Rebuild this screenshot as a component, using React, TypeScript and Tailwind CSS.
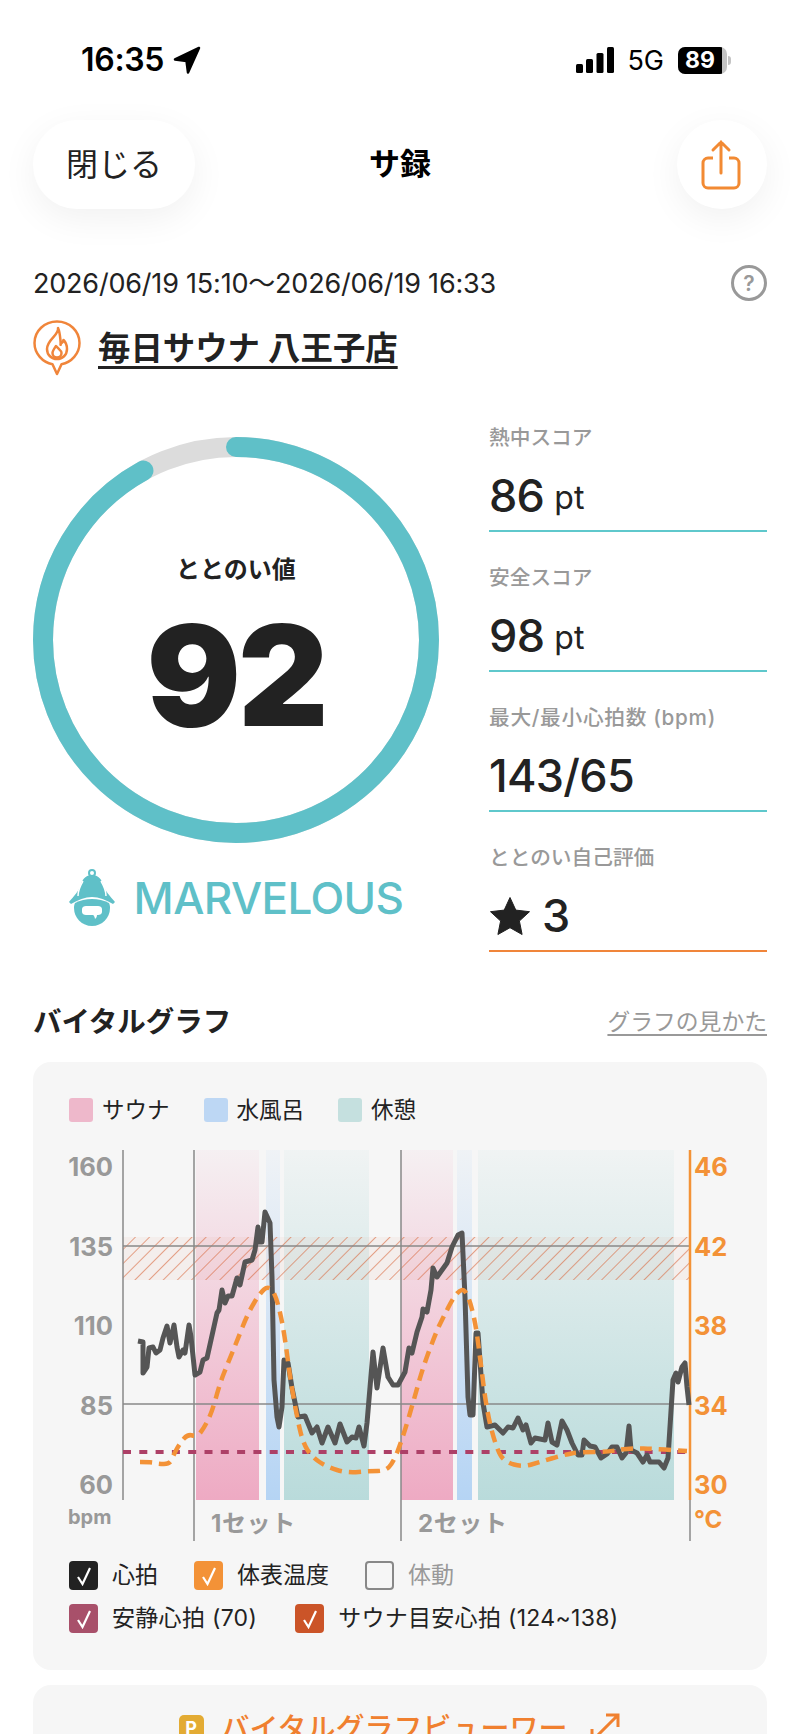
import React from "react";

const FONT = { fontFamily: 'Inter, "Noto Sans CJK JP", sans-serif' };

const HEART: [number, number][] = [
  [138, 1341], [143, 1342], [143, 1373], [147, 1367], [149, 1348], [153, 1347], [156, 1353], [160, 1350],
  [163, 1338], [167, 1326], [170, 1343], [174, 1325], [177, 1347], [179, 1357], [183, 1350], [185, 1353],
  [189, 1325], [191, 1337], [195, 1375], [200, 1372], [203, 1360], [207, 1358], [211, 1340], [217, 1313],
  [219, 1310], [222, 1290], [225, 1303], [228, 1296], [232, 1296], [237, 1278], [240, 1285], [245, 1262],
  [252, 1260], [255, 1250], [258, 1227], [260, 1242], [262, 1242], [265, 1212], [270, 1223], [272, 1277],
  [274, 1380], [277, 1417], [279, 1427], [282, 1407], [284, 1360], [288, 1363], [292, 1388], [298, 1417],
  [305, 1416], [312, 1433], [317, 1427], [322, 1443], [328, 1427], [335, 1443], [340, 1424], [347, 1442],
  [352, 1437], [356, 1438], [359, 1427], [364, 1446], [367, 1423], [373, 1352], [377, 1388], [383, 1348],
  [388, 1377], [393, 1385], [398, 1385], [405, 1372], [409, 1348], [412, 1353], [417, 1332], [422, 1317],
  [423, 1309], [427, 1312], [431, 1290], [433, 1268], [437, 1277], [442, 1270], [447, 1263], [452, 1247],
  [458, 1235], [462, 1233], [465, 1297], [468, 1397], [470, 1415], [473, 1415], [476, 1333], [478, 1333],
  [483, 1403], [487, 1427], [495, 1425], [503, 1433], [508, 1427], [513, 1428], [518, 1418], [523, 1430],
  [526, 1425], [531, 1443], [535, 1438], [545, 1440], [548, 1423], [552, 1442], [557, 1445], [562, 1421],
  [567, 1430], [572, 1443], [578, 1455], [582, 1455], [584, 1440], [590, 1446], [595, 1447], [601, 1458],
  [607, 1454], [612, 1447], [617, 1447], [622, 1458], [626, 1453], [629, 1426], [631, 1450], [637, 1453],
  [643, 1462], [647, 1455], [650, 1462], [659, 1462], [664, 1468], [668, 1458], [673, 1380], [676, 1373],
  [678, 1382], [682, 1367], [685, 1363], [687, 1387], [689, 1405],
];

const TEMP: [number, number][] = [
  [140, 1462], [152, 1462], [158, 1464], [170, 1464], [173, 1456], [180, 1443], [188, 1434], [197, 1437],
  [204, 1428], [212, 1412], [220, 1383], [228, 1363], [237, 1341], [248, 1313], [260, 1293], [268, 1286],
  [275, 1293], [282, 1320], [287, 1353], [290, 1377], [297, 1417], [303, 1443], [312, 1457], [327, 1467],
  [347, 1473], [370, 1471], [385, 1471], [393, 1463], [402, 1440], [413, 1403], [423, 1367], [437, 1330],
  [443, 1318], [453, 1298], [462, 1288], [468, 1295], [475, 1320], [480, 1357], [487, 1413], [497, 1450],
  [505, 1462], [523, 1467], [540, 1462], [563, 1455], [580, 1452], [607, 1452], [630, 1448], [657, 1449],
  [687, 1451],
];

const linePath = (pts: [number, number][]) =>
  pts.map(([x, y], i) => `${i === 0 ? "M" : "L"}${x} ${y}`).join(" ");

// quadratic through the midpoints, good enough for the temperature curve
const smoothPath = (pts: [number, number][]) => {
  let d = `M${pts[0][0]} ${pts[0][1]}`;
  for (let i = 1; i < pts.length - 1; i++) {
    const mx = (pts[i][0] + pts[i + 1][0]) / 2;
    const my = (pts[i][1] + pts[i + 1][1]) / 2;
    d += ` Q${pts[i][0]} ${pts[i][1]} ${mx} ${my}`;
  }
  const last = pts[pts.length - 1];
  return `${d} L${last[0]} ${last[1]}`;
};

function StatusBar() {
  return (
    <div className="flex h-[120px] items-center justify-between pl-[81px] pr-[69px] text-black">
      <div className="flex items-center gap-[9px]">
        <span className="text-[32px] font-semibold leading-none tracking-[-0.3px]">16:35</span>
        <svg width="28" height="28" viewBox="0 0 28 28">
          <path d="M26 2 2 13.500 13.500 15 15 26.500Z" fill="#000" stroke="#000" strokeWidth="2.500" strokeLinejoin="round" />
        </svg>
      </div>
      <div className="flex items-center">
        <svg width="38" height="26" viewBox="0 0 38 26">
          <rect x="0" y="17" width="7" height="9" rx="1.500" fill="#000" />
          <rect x="10" y="12" width="7" height="14" rx="1.500" fill="#000" />
          <rect x="20.500" y="6" width="7" height="20" rx="1.500" fill="#000" />
          <rect x="31" y="0" width="7" height="26" rx="1.500" fill="#000" />
        </svg>
        <span className="ml-[13px] text-[27px] font-normal leading-none">5G</span>
        <div className="ml-[14px] flex items-center">
          <div className="flex h-[27px] w-[49px] items-center overflow-hidden rounded-[7px] bg-[#c4c4c4]">
            <div className="flex h-full w-[44px] items-center justify-center bg-black text-[23px] font-bold leading-none text-white">
              89
            </div>
          </div>
          <div className="ml-[1px] h-[9px] w-[3px] rounded-r-full bg-[#c4c4c4]" />
        </div>
      </div>
    </div>
  );
}

function Header() {
  return (
    <div className="grid h-[89px] grid-cols-[1fr_auto_1fr] items-center px-[33px]">
      <div className="flex h-[89px] w-[162px] items-center justify-center rounded-[44px] bg-white text-[32px] text-[#222] shadow-[0_10px_36px_rgba(0,0,0,0.06)]">
        閉じる
      </div>
      <div className="text-[31px] font-bold text-black">サ録</div>
      <div className="flex justify-end">
        <div className="flex h-[89px] w-[90px] items-center justify-center rounded-full bg-white shadow-[0_10px_36px_rgba(0,0,0,0.06)]">
          <svg width="40" height="52" viewBox="0 0 40 52" fill="none" stroke="#f28a33" strokeWidth="3" className="mr-[2px]">
            <path d="M12 19H7a5 5 0 0 0-5 5v20a5 5 0 0 0 5 5h26a5 5 0 0 0 5-5V24a5 5 0 0 0-5-5h-5" />
            <path d="M20 34V3M12 11l8-8 8 8" strokeLinecap="round" />
          </svg>
        </div>
      </div>
    </div>
  );
}

function PlaceIcon() {
  return (
    <svg width="48" height="56" viewBox="0 0 48 56" fill="none" stroke="#f0853a" strokeWidth="2.500" strokeLinejoin="round">
      <path d="M24 1.500C11.500 1.500 1.500 11 1.500 23c0 10.500 8 19.500 18 21.200L24 54l4.500-9.800c10-1.700 18-10.700 18-21.200C46.500 11 36.500 1.500 24 1.500Z" />
      <path d="M25 8c1.500 7-11 11-11 21 0 6 4.500 10 10 10s10-4 10-10c0-4-2-7.500-3.500-9-.5 2-1.500 3.500-3 4.200C28 28 27.500 13 25 8Z" />
      <path d="M23 26c-2 3-3.500 5-3.500 7a4.500 4.500 0 0 0 9 0c0-2.500-3-4-5.500-7Z" />
    </svg>
  );
}

function Mascot() {
  return (
    <svg width="50" height="57" viewBox="0 0 50 57">
      <circle cx="25" cy="4" r="3" fill="none" stroke="#5fc0c8" strokeWidth="2" />
      <path d="M25 6c-5 0-9 3-11 9-2 7-7 12-12 18l2 2c7-4 14-7 21-7s14 3 21 7l2-2c-5-6-10-11-12-18-2-6-6-9-11-9Z" fill="#5fc0c8" />
      <path d="M16 12c-3 5-5 10-5 15M34 12c3 5 5 10 5 15" stroke="#fff" strokeWidth="1.500" fill="none" />
      <path d="M8 34c5-2.500 11-4 17-4s12 1.500 17 4c1 2 1 4 1 5 0 10-8 18-18 18S7 49 7 39c0-1 0-3 1-5Z" fill="#5fc0c8" />
      <path d="M15 40c0-2 2-3 4-3h12c2 0 4 1 4 3v3c0 2-2 3-4 3h-1c0 2-1 3-2 4 0-1-1-4-2-4h-7c-2 0-4-1-4-3Z" fill="#fff" />
    </svg>
  );
}

function ScoreRing() {
  const r = 193;
  const circumference = 2 * Math.PI * r;
  return (
    <div className="grid h-[406px] w-[406px]">
      <svg width="406" height="406" viewBox="0 0 406 406" className="[grid-area:1/1]">
        <circle cx="203" cy="203" r={r} fill="none" stroke="#dcdcdc" strokeWidth="20" />
        <circle
          cx="203"
          cy="203"
          r={r}
          fill="none"
          stroke="#5fc0c8"
          strokeWidth="20"
          strokeLinecap="round"
          strokeDasharray={`${circumference * 0.92} ${circumference}`}
          transform="rotate(-90 203 203)"
        />
      </svg>
      <div className="flex flex-col items-center [grid-area:1/1]">
        <div className="mt-[113px] text-[24px] font-semibold leading-[40px] text-[#222]">ととのい値</div>
        <div className="mt-[17px] text-[140px] font-black leading-[136px] tracking-[-3px] text-[#222]">92</div>
      </div>
    </div>
  );
}

function Stat({ label, value, unit, line = "border-[#5fc8cc]", spaced }: { label: string; value: React.ReactNode; unit?: string; line?: string; spaced?: boolean }) {
  return (
    <div className={`h-[115px] border-b-2 ${line}`}>
      <div className={`h-[42px] text-[20.7px] font-medium leading-[42px] text-[#999] ${spaced ? "tracking-[0.7px]" : ""}`}>{label}</div>
      <div className="flex h-[71px] items-center pt-[2px] text-[45px] font-medium leading-none tracking-[-0.7px] text-[#222]">
        {value}
        {unit && <span className="ml-[10px] mt-[4px] text-[32px] font-normal tracking-normal">{unit}</span>}
      </div>
    </div>
  );
}

function Chart() {
  const labelsL = [["160", 1176], ["135", 1256], ["110", 1335], ["85", 1415], ["60", 1494]];
  const labelsR = [["46", 1176], ["42", 1256], ["38", 1335], ["34", 1415], ["30", 1494]];
  return (
    <svg width="734" height="410" viewBox="33 1140 734 410" className="mt-[18px] block">
      <defs>
        <linearGradient id="sauna" x1="0" y1="0" x2="0" y2="1">
          <stop offset="0" stopColor="#eeaac3" stopOpacity="0.08" />
          <stop offset="1" stopColor="#eeaac3" />
        </linearGradient>
        <linearGradient id="cold" x1="0" y1="0" x2="0" y2="1">
          <stop offset="0" stopColor="#b5d4f4" stopOpacity="0.1" />
          <stop offset="1" stopColor="#b5d4f4" />
        </linearGradient>
        <linearGradient id="rest" x1="0" y1="0" x2="0" y2="1">
          <stop offset="0" stopColor="#b9dbdb" stopOpacity="0.1" />
          <stop offset="1" stopColor="#b9dbdb" />
        </linearGradient>
        <pattern id="hatch" width="10" height="10" patternUnits="userSpaceOnUse" patternTransform="rotate(45)">
          <line x1="0" y1="0" x2="0" y2="10" stroke="#d9693f" strokeWidth="2" strokeOpacity="0.6" />
        </pattern>
      </defs>

      <rect x="196" y="1150" width="63" height="350" fill="url(#sauna)" />
      <rect x="266" y="1150" width="14" height="350" fill="url(#cold)" />
      <rect x="284" y="1150" width="85" height="350" fill="url(#rest)" />
      <rect x="401" y="1150" width="52" height="350" fill="url(#sauna)" />
      <rect x="457" y="1150" width="15" height="350" fill="url(#cold)" />
      <rect x="478" y="1150" width="196" height="350" fill="url(#rest)" />

      <rect x="123" y="1237" width="567" height="43" fill="#e58f6c" fillOpacity="0.07" />
      <rect x="123" y="1237" width="567" height="43" fill="url(#hatch)" />

      <line x1="123" y1="1246" x2="690" y2="1246" stroke="#888" strokeWidth="1.500" />
      <line x1="123" y1="1404" x2="690" y2="1404" stroke="#888" strokeWidth="1.500" />

      <line x1="123" y1="1150" x2="123" y2="1500" stroke="#888" strokeWidth="1.500" />
      <line x1="194" y1="1150" x2="194" y2="1541" stroke="#888" strokeWidth="1.500" />
      <line x1="401" y1="1150" x2="401" y2="1541" stroke="#888" strokeWidth="1.500" />
      <line x1="690" y1="1500" x2="690" y2="1541" stroke="#888" strokeWidth="1.500" />
      <line x1="690" y1="1150" x2="690" y2="1500" stroke="#f39237" strokeWidth="2.500" />

      <line x1="123" y1="1452" x2="690" y2="1452" stroke="#ad4067" strokeWidth="4" strokeDasharray="8 8.300" />
      <path d={linePath(HEART)} fill="none" stroke="#555" strokeWidth="5" strokeLinejoin="round" />
      <path d={smoothPath(TEMP)} fill="none" stroke="#f39237" strokeWidth="4.500" strokeDasharray="12 7" />

      <g style={FONT} fontSize="25.500" fontWeight="700">
        {labelsL.map(([t, y]) => (
          <text key={t} x="113" y={y} textAnchor="end" fill="#999">
            {t}
          </text>
        ))}
        {labelsR.map(([t, y]) => (
          <text key={t} x="694" y={y} fill="#f39237">
            {t}
          </text>
        ))}
        <text x="694" y="1528" fill="#f39237" fontSize="24">
          °C
        </text>
        <text x="68" y="1524" fill="#999" fontSize="20">
          bpm
        </text>
        <text x="211" y="1532" fill="#999" fontSize="24" letterSpacing="0.600">
          1セット
        </text>
        <text x="418" y="1532" fill="#999" fontSize="24" letterSpacing="0.600">
          2セット
        </text>
      </g>
    </svg>
  );
}

function Check({ color, label, off, spaced }: { color: string; label: string; off?: boolean; spaced?: boolean }) {
  return (
    <div className="flex items-center gap-[14px]">
      <div className={`flex h-[29px] w-[29px] items-center justify-center rounded-[4px] ${color}`}>
        {!off && (
          <svg width="16" height="20" viewBox="0 0 16 20" fill="none" stroke="#fff" strokeWidth="2.200">
            <path d="M2 11l4.500 7L14 2" />
          </svg>
        )}
      </div>
      <span className={`text-[23px] leading-none ${off ? "text-[#999]" : "text-[#222]"} ${spaced ? "tracking-[0.3px]" : ""}`}>{label}</span>
    </div>
  );
}

function Legend({ color, label }: { color: string; label: string }) {
  return (
    <div className="flex items-center gap-[9px]">
      <div className={`h-[24px] w-[24px] rounded-[3px] ${color}`} />
      <span className="text-[22.500px] leading-none text-[#222]">{label}</span>
    </div>
  );
}

export default function App() {
  return (
    <div className="h-[1734px] w-[800px] overflow-hidden bg-white" style={FONT}>
      <StatusBar />
      <Header />

      <div className="mt-[54px] flex h-[40px] items-center justify-between px-[33px]">
        <span className="text-[27px] leading-none tracking-[-0.2px] text-[#222]">2026/06/19 15:10～2026/06/19 16:33</span>
        <div className="flex h-[36px] w-[36px] items-center justify-center rounded-full border-[3px] border-[#999] text-[21px] font-semibold leading-none text-[#999]">
          ?
        </div>
      </div>

      <div className="mt-[17px] flex h-[55px] items-start gap-[17px] px-[33px]">
        <PlaceIcon />
        <span className="mt-[8px] text-[32.400px] font-semibold leading-[42px] text-[#222] underline decoration-[3px] underline-offset-[6px]">
          毎日サウナ 八王子店
        </span>
      </div>

      <div className="mt-[42px] flex justify-between px-[33px]">
        <div className="pt-[20px]">
          <ScoreRing />
          <div className="mt-[26px] flex h-[57px] items-center justify-center gap-[17px] pr-[2px]">
            <Mascot />
            <span className="text-[44px] font-medium leading-none tracking-[-0.6px] text-[#5fc0c8]">MARVELOUS</span>
          </div>
        </div>
        <div className="flex w-[278px] flex-col gap-[25px]">
          <Stat label="熱中スコア" value="86" unit="pt" />
          <Stat label="安全スコア" value="98" unit="pt" />
          <Stat label="最大/最小心拍数 (bpm)" value="143/65" spaced />
          <Stat
            label="ととのい自己評価"
            line="border-[#f0853a]"
            value={
              <>
                <svg width="42" height="40" viewBox="0 0 42 40" className="mr-[11px]">
                  <path d="M21 1.500l5.800 12.600 13.700 1.600-10.100 9.300 2.700 13.500L21 31.700 8.900 38.500l2.700-13.500L1.500 15.700l13.700-1.600Z" fill="#222" stroke="#222" strokeLinejoin="round" />
                </svg>
                3
              </>
            }
          />
        </div>
      </div>

      <div className="mt-[50px] flex h-[40px] items-center justify-between px-[33px]">
        <span className="text-[28.500px] font-bold leading-none text-[#222]">バイタルグラフ</span>
        <span className="text-[22.800px] leading-none text-[#999] underline underline-offset-[4px]">グラフの見かた</span>
      </div>

      <div className="mx-[33px] mt-[20px] h-[608px] rounded-[18px] bg-[#f6f6f6] pt-[36px]">
        <div className="flex gap-[34px] pl-[36px]">
          <Legend color="bg-[#eeb8cb]" label="サウナ" />
          <Legend color="bg-[#bdd7f4]" label="水風呂" />
          <Legend color="bg-[#c5e0df]" label="休憩" />
        </div>
        <Chart />
        <div className="mt-[11px] flex flex-col gap-[14px] pl-[36px]">
          <div className="flex gap-[36px]">
            <Check color="bg-[#222]" label="心拍" />
            <Check color="bg-[#f39237]" label="体表温度" />
            <Check color="border-2 border-[#888]" label="体動" off />
          </div>
          <div className="flex gap-[38px]">
            <Check color="bg-[#a8506a]" label="安静心拍 (70)" spaced />
            <Check color="bg-[#cb5428]" label="サウナ目安心拍 (124~138)" spaced />
          </div>
        </div>
      </div>

      <div className="mx-[33px] mt-[15px] h-[120px] rounded-[18px] bg-[#f6f6f6] pt-[24px]">
        <div className="flex items-start justify-center gap-[17px]">
          <div className="mt-[6px] flex h-[25px] w-[25px] items-center justify-center rounded-[5px] bg-[#e3ab33] text-[18px] font-bold leading-none text-white">
            P
          </div>
          <span className="text-[29px] font-medium leading-[40px] text-[#f0802f]">バイタルグラフビューワー</span>
          <svg width="32" height="32" viewBox="0 0 32 32" fill="none" stroke="#f0802f" strokeWidth="3" className="ml-[5px] mt-[3px]">
            <path d="M3 29 29 3M17 3h12v12M3 17v12h12" />
          </svg>
        </div>
      </div>
    </div>
  );
}
